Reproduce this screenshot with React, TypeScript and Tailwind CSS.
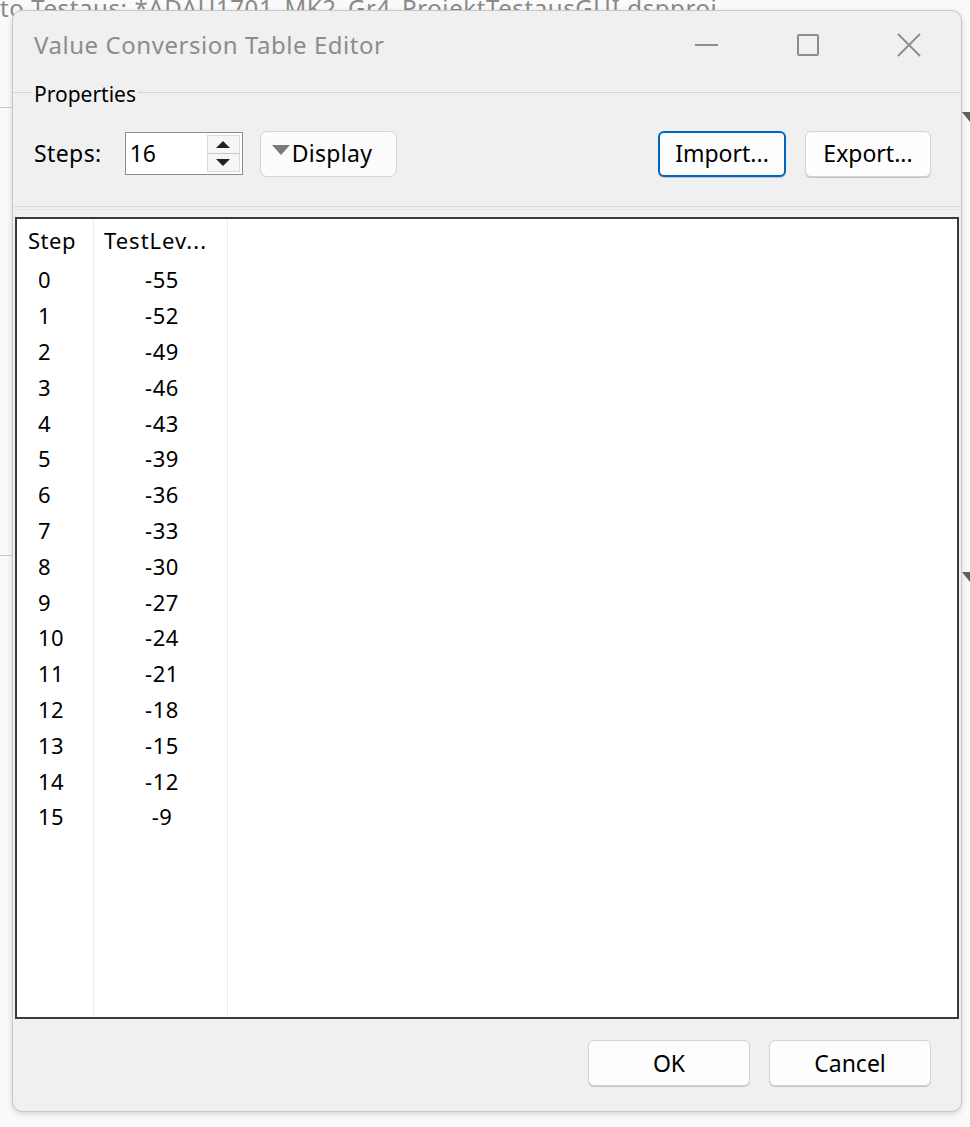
import { useState } from 'react';

const values = [-55, -52, -49, -46, -43, -39, -36, -33, -30, -27, -24, -21, -18, -15, -12, -9];

function WinButton({ label, primary, className }: { label: string; primary?: boolean; className?: string }) {
  return (
    <button
      type="button"
      className={
        'flex items-center justify-center rounded-[6px] bg-[#fdfdfd] text-[23px] text-black shadow-[0_1px_0_#c4c4c4] ' +
        (primary ? 'border-2 border-[#0067c0] ' : 'border border-[#d4d4d4] ') +
        (className ?? '')
      }
    >
      {label}
    </button>
  );
}

export default function App() {
  const [steps] = useState(16);

  return (
    <div className="relative h-[1127px] w-[970px] overflow-hidden bg-[#fafafa] font-['Noto_Sans',sans-serif]">
      {/* desktop behind the dialog */}
      <div className="absolute left-0 top-[-10px] whitespace-nowrap text-[24px] tracking-[0.6px] text-[#8a8a8a]">
        to Testaus: *ADAU1701_MK2_Gr4_ProjektTestausGUI.dspproj
      </div>
      <div className="absolute left-0 top-[107px] h-px w-[14px] bg-[#c8c8c8]" />
      <div className="absolute left-0 top-[555px] h-px w-[14px] bg-[#c8c8c8]" />
      <div className="absolute right-0 top-[112px] h-0 w-0 border-l-[8px] border-t-[10px] border-l-transparent border-t-[#606060]" />
      <div className="absolute right-0 top-[572px] h-0 w-0 border-l-[8px] border-t-[10px] border-l-transparent border-t-[#606060]" />

      {/* dialog window */}
      <div className="absolute left-[12px] top-[10px] flex h-[1102px] w-[950px] flex-col rounded-[10px] border border-[#c6c6c6] bg-[#f0f0f0] shadow-[0_2px_6px_rgba(0,0,0,0.15)]">
        {/* title bar */}
        <div className="flex h-[68px] shrink-0 items-center pl-[21px]">
          <span className="flex-1 text-[24px] tracking-[0.55px] text-[#8c8c8c]">Value Conversion Table Editor</span>
          <div className="flex items-center">
            <div className="flex w-[102px] justify-center">
              <div className="h-[2px] w-[23px] bg-[#8c8c8c]" />
            </div>
            <div className="flex w-[102px] justify-center">
              <div className="h-[22px] w-[22px] rounded-[2px] border-2 border-[#8c8c8c]" />
            </div>
            <div className="flex w-[102px] justify-center pr-[2px]">
              <svg width="24" height="24" viewBox="0 0 24 24" fill="none" stroke="#8c8c8c" strokeWidth="1.8">
                <path d="M1 1 L23 23 M23 1 L1 23" />
              </svg>
            </div>
          </div>
        </div>

        {/* Properties group box */}
        <div className="relative mt-[13px] shrink-0">
          <div className="h-px bg-[#d4d4d4]" />
          <span className="absolute left-[19px] top-[-12px] bg-[#f0f0f0] px-[2px] text-[21px] leading-[28px] text-black">
            Properties
          </span>
          <div className="flex h-[113px] items-center pl-[21px] pr-[30px] pt-[8px]">
            <span className="text-[23px] tracking-[0.4px] text-black">Steps:</span>
            <div className="ml-[23px] flex h-[43px] w-[118px] items-stretch border border-[#8e8e8e] bg-white">
              <span className="flex flex-1 items-center pl-[4px] text-[23px] text-black">{steps}</span>
              <div className="my-[2px] mr-[2px] flex w-[33px] flex-col border border-[#d9d9d9] bg-[#f6f6f6]">
                <div className="flex flex-1 items-center justify-center border-b border-[#c8c8c8]">
                  <div className="h-0 w-0 border-x-[7px] border-b-[7px] border-x-transparent border-b-[#222]" />
                </div>
                <div className="flex flex-1 items-center justify-center">
                  <div className="h-0 w-0 border-x-[7px] border-t-[7px] border-x-transparent border-t-[#222]" />
                </div>
              </div>
            </div>
            <button
              type="button"
              className="ml-[17px] flex h-[46px] w-[137px] items-center rounded-[7px] border border-[#d4d4d4] bg-[#fbfbfb] pl-[11px] text-[23px] tracking-[0.3px] text-black"
            >
              <span className="mb-[8px] mr-[2px] h-0 w-0 border-x-[9px] border-t-[10px] border-x-transparent border-t-[#7a7a7a]" />
              Display
            </button>
            <div className="flex-1" />
            <WinButton label="Import..." primary className="h-[46px] w-[128px]" />
            <WinButton label="Export..." className="ml-[19px] h-[46px] w-[126px]" />
          </div>
          <div className="h-px bg-[#dadada]" />
          <div className="mt-[2px] h-px bg-[#e4e4e4]" />
        </div>

        {/* value list */}
        <div className="mx-[2px] mt-[7px] flex h-[802px] shrink-0 border-2 border-[#3a3a3a] bg-white text-[22px] tracking-[0.5px] text-black">
          <div className="flex w-[77px] flex-col border-r border-[#ececec]">
            <div className="flex h-[43px] items-center pl-[11px]">Step</div>
            {values.map((_, i) => (
              <div key={i} className="flex h-[35.8px] items-center pl-[21px]">
                {i}
              </div>
            ))}
          </div>
          <div className="flex w-[134px] flex-col border-r border-[#ececec]">
            <div className="flex h-[43px] items-center pl-[10px] tracking-[1px]">TestLev...</div>
            {values.map((v, i) => (
              <div key={i} className="flex h-[35.8px] items-center justify-center pl-[3px]">
                {v}
              </div>
            ))}
          </div>
          <div className="flex-1" />
        </div>

        {/* footer */}
        <div className="flex flex-1 items-start justify-end pr-[30px] pt-[21px]">
          <WinButton label="OK" className="h-[46px] w-[162px]" />
          <WinButton label="Cancel" className="ml-[19px] h-[46px] w-[162px]" />
        </div>
      </div>
    </div>
  );
}
